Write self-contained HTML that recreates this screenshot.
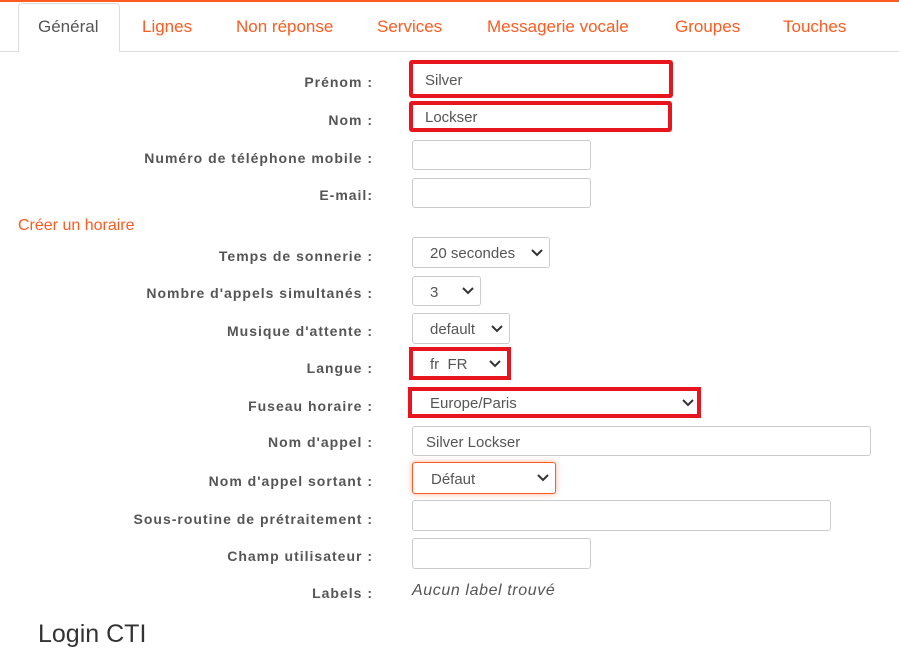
<!DOCTYPE html>
<html><head><meta charset="utf-8"><style>
*{box-sizing:border-box;margin:0;padding:0}
body{width:899px;height:633px;overflow:hidden;background:#fff;font-family:"Liberation Sans",Arial,sans-serif;position:relative;color:#555}
.a{position:absolute}
.topl{left:0;top:0;width:899px;height:2px;background:#ff5a1f}
.tabline{left:0;top:51px;width:899px;height:1px;background:#ddd}
.tab{top:17px;font-size:17px;color:#ff5a1f}
.act{left:18px;top:3px;width:102px;height:49px;border:1px solid #ddd;border-bottom:none;border-radius:4px 4px 0 0;background:#fff}
.lbl{right:526px;font-size:14px;font-weight:bold;color:#555;text-align:right;white-space:nowrap;letter-spacing:1px}
.in{border:1px solid #ccc;border-radius:3px;background:#fff;font-size:15px;color:#555;padding-left:13px;padding-top:2px;display:flex;align-items:center}
.red{border:4px solid #e8141e}
.chev{position:absolute;right:6px;top:50%;margin-top:-4px}
</style></head><body>
<div class="a topl"></div>
<div class="a tabline"></div>
<div class="a act"></div>
<div class="a tab" style="left:38px;color:#555">Général</div>
<div class="a tab" style="left:142px">Lignes</div>
<div class="a tab" style="left:236px">Non réponse</div>
<div class="a tab" style="left:377px">Services</div>
<div class="a tab" style="left:487px">Messagerie vocale</div>
<div class="a tab" style="left:675px">Groupes</div>
<div class="a tab" style="left:783px">Touches</div>

<div class="a lbl" style="top:74px">Prénom :</div>
<div class="a lbl" style="top:112px">Nom :</div>
<div class="a lbl" style="top:150px">Numéro de téléphone mobile :</div>
<div class="a lbl" style="top:187px">E-mail:</div>
<div class="a" style="left:18px;top:217px;font-size:16px;color:#ff5a1f">Créer un horaire</div>
<div class="a lbl" style="top:248px">Temps de sonnerie :</div>
<div class="a lbl" style="top:285px">Nombre d'appels simultanés :</div>
<div class="a lbl" style="top:323px">Musique d'attente :</div>
<div class="a lbl" style="top:360px">Langue :</div>
<div class="a lbl" style="top:398px">Fuseau horaire :</div>
<div class="a lbl" style="top:434px">Nom d'appel :</div>
<div class="a lbl" style="top:473px">Nom d'appel sortant :</div>
<div class="a lbl" style="top:511px">Sous-routine de prétraitement :</div>
<div class="a lbl" style="top:548px">Champ utilisateur :</div>
<div class="a lbl" style="top:585px">Labels :</div>
<div class="a" style="left:412px;top:582px;font-size:16px;font-style:italic;color:#555;letter-spacing:.6px">Aucun label trouvé</div>
<div class="a" style="left:38px;top:620px;font-size:25px;color:#333">Login CTI</div>

<div class="a in red" style="left:409px;top:60px;width:264px;height:38px;padding-left:12px">Silver</div>
<div class="a in red" style="left:409px;top:101px;width:263px;height:31px;padding-left:12px">Lockser</div>
<div class="a in" style="left:412px;top:140px;width:179px;height:30px"></div>
<div class="a in" style="left:412px;top:178px;width:179px;height:30px"></div>

<div class="a in" style="left:412px;top:237px;width:138px;height:31px;padding-left:17px">20 secondes<svg class="chev" width="12" height="8"><polyline points="1,1 6,6 11,1" fill="none" stroke="#333" stroke-width="2"/></svg></div>
<div class="a in" style="left:412px;top:276px;width:69px;height:30px;padding-left:17px">3<svg class="chev" width="12" height="8"><polyline points="1,1 6,6 11,1" fill="none" stroke="#333" stroke-width="2"/></svg></div>
<div class="a in" style="left:412px;top:313px;width:98px;height:31px;padding-left:17px">default<svg class="chev" width="12" height="8"><polyline points="1,1 6,6 11,1" fill="none" stroke="#333" stroke-width="2"/></svg></div>
<div class="a in red" style="left:409px;top:347px;width:102px;height:33px;padding-left:17px;border-radius:0">fr&nbsp; FR<svg class="chev" width="12" height="8"><polyline points="1,1 6,6 11,1" fill="none" stroke="#333" stroke-width="2"/></svg></div>
<div class="a in red" style="left:408px;top:387px;width:293px;height:31px;padding-left:18px;border-radius:0">Europe/Paris<svg class="chev" width="12" height="8" style="right:3px"><polyline points="1,1 6,6 11,1" fill="none" stroke="#333" stroke-width="2"/></svg></div>
<div class="a in" style="left:412px;top:426px;width:459px;height:30px">Silver Lockser</div>
<div class="a in" style="left:412px;top:462px;width:144px;height:32px;padding-left:18px;border-color:#ff5a1f;box-shadow:0 0 6px rgba(255,90,31,.45)">Défaut<svg class="chev" width="12" height="8"><polyline points="1,1 6,6 11,1" fill="none" stroke="#333" stroke-width="2"/></svg></div>
<div class="a in" style="left:412px;top:500px;width:419px;height:31px"></div>
<div class="a in" style="left:412px;top:538px;width:179px;height:31px"></div>
</body></html>
